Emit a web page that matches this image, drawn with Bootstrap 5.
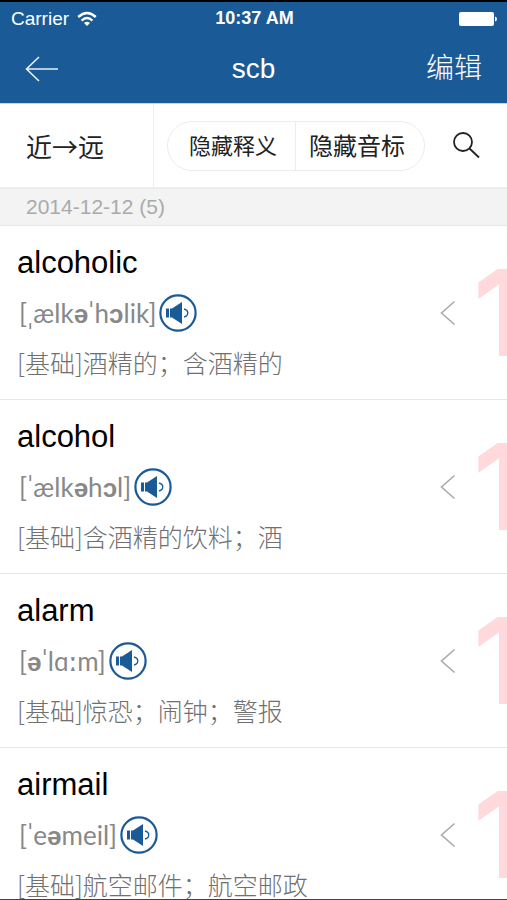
<!DOCTYPE html>
<html lang="zh-CN">
<head>
<meta charset="utf-8">
<meta name="viewport" content="width=device-width, initial-scale=1">
<title>scb</title>
<link href="https://cdn.jsdelivr.net/npm/bootstrap@5.3.0/dist/css/bootstrap.min.css" rel="stylesheet">
<style>
body{font-family:"Liberation Sans","Noto Sans CJK SC",sans-serif;color:#000;border-top:2px solid #000;border-bottom:1px solid #444}
.app-head{background:#1a5b97;color:#fff}
.status-bar{height:33px;padding:0 9px 0 11px;font-size:19px;line-height:33px}
.status-side{flex:1 1 0}
.clock{font-size:18px}
.title-bar{height:68px;padding:0 25px}
.title-bar h1{font-size:28px;line-height:40px}
.edit-btn{font-size:28px;line-height:40px;font-weight:300}
.plain-btn{background:none;border:0;padding:0;color:inherit}
.tools{height:84px;border-top:1px solid #c5d6e5}
.sort-btn{width:154px;padding:0 0 0 26px;font-family:"Noto Sans CJK SC",sans-serif;font-size:26px;color:#222;border-right:1px solid #eee}
.pill{height:50px;width:258px;margin-left:13px;border:1px solid #ececec;border-radius:25px;color:#222}
.pill-a{font-size:22px;padding:2px 0 0 21px;width:128px;border-right:1px solid #ececec}
.pill-b{font-size:24px;padding:2px 0 0 13px}
.find-btn{margin-right:27px}
.date-row{height:39px;margin:0;padding-left:26px;font-size:21px;line-height:36px;font-weight:400;color:#aaa;background:#f3f3f3;border-top:2px solid #ececec;border-bottom:1px solid #e8e8e8}
.entry{border-bottom:1px solid #e6e6e6}
.entry-text{padding:17px 0 15px 17px;min-width:0}
.entry h3{font-size:31px;line-height:40px;margin:0 0 11px;font-weight:400}
.phon{height:38px;margin-bottom:12px;padding-left:2px;font-family:Lato,"Liberation Sans",sans-serif;font-size:26px;font-weight:400;line-height:38px;color:#888;gap:3px}
.phon b{font-family:"Liberation Sans",sans-serif}
.meaning{font-family:"Noto Sans CJK SC",sans-serif;font-size:25px;line-height:36px;padding-bottom:4px;font-weight:300;color:#707070;margin:0}
.count{width:34px;margin-left:17px;font-family:Inter,sans-serif;font-size:120px;line-height:173px;font-weight:700;color:#ffd9db}
</style>
</head>
<body class="vh-100 d-flex flex-column overflow-hidden bg-white">
<header class="app-head flex-shrink-0">
  <div class="status-bar d-flex align-items-center">
    <div class="status-side d-flex align-items-center gap-2">Carrier
      <svg width="20" height="16" viewBox="0 0 20 16" fill="none" stroke="#fff" aria-hidden="true"><path d="M1.2 6Q10-2.2 18.8 6M4.6 9.6Q10 4.6 15.4 9.6" stroke-width="2.4"/><path d="M7 12Q10 9.4 13 12L10 15Z" fill="#fff" stroke="none"/></svg>
    </div>
    <div class="clock fw-bold">10:37 AM</div>
    <div class="status-side d-flex justify-content-end">
      <svg width="40" height="16" viewBox="0 0 40 16" fill="#fff" aria-hidden="true"><rect x="1" y="1" width="35" height="14" rx="2"/><path d="M37 5.5Q39 6 39 8T37 10.5Z"/></svg>
    </div>
  </div>
  <div class="title-bar d-flex align-items-center">
    <div class="status-side d-flex"><button class="plain-btn d-flex" aria-label="返回"><svg width="34" height="26" viewBox="0 0 34 26" fill="none" stroke="#e8f1f8" stroke-width="1.6"><path d="M14 1 1.5 13 14 25M1.5 13H33"/></svg></button></div>
    <h1 class="m-0 fw-normal">scb</h1>
    <div class="status-side text-end"><button class="plain-btn edit-btn">编辑</button></div>
  </div>
</header>
<div class="tools d-flex align-items-center flex-shrink-0">
  <button class="plain-btn sort-btn h-100 text-start flex-shrink-0">近→远</button>
  <div class="pill d-flex flex-shrink-0">
    <button class="plain-btn pill-a text-start text-nowrap">隐藏释义</button>
    <button class="plain-btn pill-b text-nowrap">隐藏音标</button>
  </div>
  <button class="plain-btn find-btn d-flex ms-auto" aria-label="搜索"><svg width="28" height="28" viewBox="0 0 28 28" fill="none" stroke="#222" stroke-width="1.8"><circle cx="11" cy="10" r="9"/><path d="M17.5 16.500 27 25.500"/></svg></button>
</div>
<h2 class="date-row flex-shrink-0">2014-12-12 (5)</h2>
<svg class="d-none" aria-hidden="true">
  <symbol id="speaker" viewBox="0 0 38 38"><circle cx="19" cy="19" r="17.6" fill="#fff" stroke="#1a5b97" stroke-width="2.2"/><path d="M7 14.500h3v9h-3ZM11 14.500h2L23 8v22l-10-6.500h-2Z" fill="#1a5b97"/><path d="M25 15q3.800 1 3.800 4t-3.800 4" fill="none" stroke="#1a5b97" stroke-width="1.300"/></symbol>
  <symbol id="chev" viewBox="0 0 16 26"><path d="M14.500 1.500 1.500 13l13 11.500" fill="none" stroke="#aaa" stroke-width="1.600"/></symbol>
</svg>
<main class="flex-fill overflow-hidden">
  <article class="entry d-flex align-items-center overflow-hidden">
    <div class="entry-text flex-fill text-nowrap">
      <h3>alcoholic</h3>
      <div class="phon d-flex align-items-center"><span>[ˌælk<b>ə</b>ˈh<b>ɔ</b>lik]</span><button class="plain-btn d-flex" aria-label="发音"><svg width="38" height="38"><use href="#speaker"/></svg></button></div>
      <p class="meaning">[基础]酒精的；含酒精的</p>
    </div>
    <svg class="flex-shrink-0" width="16" height="26" aria-hidden="true"><use href="#chev"/></svg>
    <div class="count flex-shrink-0 overflow-hidden">1</div>
  </article>
  <article class="entry d-flex align-items-center overflow-hidden">
    <div class="entry-text flex-fill text-nowrap">
      <h3>alcohol</h3>
      <div class="phon d-flex align-items-center"><span>[ˈælk<b>ə</b>h<b>ɔ</b>l]</span><button class="plain-btn d-flex" aria-label="发音"><svg width="38" height="38"><use href="#speaker"/></svg></button></div>
      <p class="meaning">[基础]含酒精的饮料；酒</p>
    </div>
    <svg class="flex-shrink-0" width="16" height="26" aria-hidden="true"><use href="#chev"/></svg>
    <div class="count flex-shrink-0 overflow-hidden">1</div>
  </article>
  <article class="entry d-flex align-items-center overflow-hidden">
    <div class="entry-text flex-fill text-nowrap">
      <h3>alarm</h3>
      <div class="phon d-flex align-items-center"><span>[<b>ə</b>ˈlɑ<b>ː</b>m]</span><button class="plain-btn d-flex" aria-label="发音"><svg width="38" height="38"><use href="#speaker"/></svg></button></div>
      <p class="meaning">[基础]惊恐；闹钟；警报</p>
    </div>
    <svg class="flex-shrink-0" width="16" height="26" aria-hidden="true"><use href="#chev"/></svg>
    <div class="count flex-shrink-0 overflow-hidden">1</div>
  </article>
  <article class="entry d-flex align-items-center overflow-hidden">
    <div class="entry-text flex-fill text-nowrap">
      <h3>airmail</h3>
      <div class="phon d-flex align-items-center"><span>[ˈe<b>ə</b>meil]</span><button class="plain-btn d-flex" aria-label="发音"><svg width="38" height="38"><use href="#speaker"/></svg></button></div>
      <p class="meaning">[基础]航空邮件；航空邮政</p>
    </div>
    <svg class="flex-shrink-0" width="16" height="26" aria-hidden="true"><use href="#chev"/></svg>
    <div class="count flex-shrink-0 overflow-hidden">1</div>
  </article>
</main>
<script src="https://cdn.jsdelivr.net/npm/bootstrap@5.3.0/dist/js/bootstrap.bundle.min.js"></script>
</body>
</html>
